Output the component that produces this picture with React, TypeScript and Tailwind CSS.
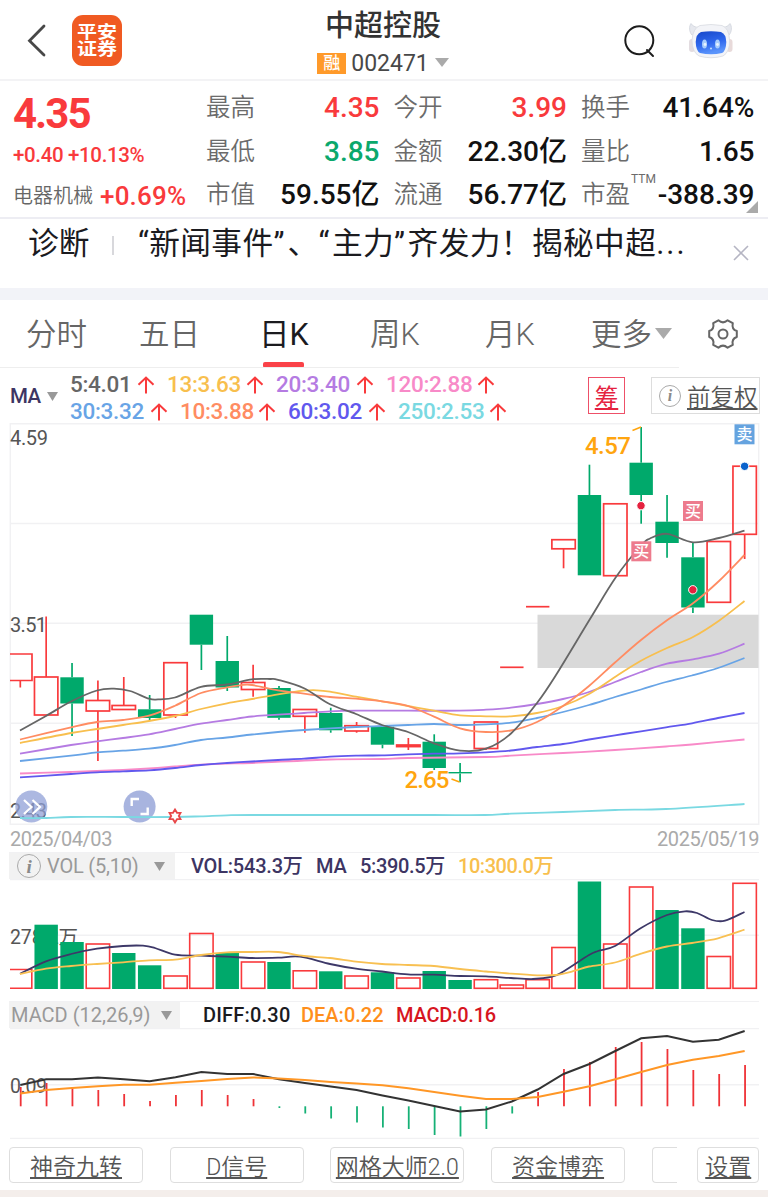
import React from "react";

type Point = [number, number];
type Candle = {
  up: boolean;
  top: number;
  bottom: number;
  high?: number;
  low?: number;
};

const RED = "#f93a3c";
const GREEN = "#00a96b";
const STEP = 25.87;
const xAt = (i: number) => 20.3 + STEP * i;

const candles: Candle[] = [
  { up: true, top: 654, bottom: 680.5, low: 687.5 },
  { up: true, top: 677, bottom: 715, high: 616.5 },
  { up: false, top: 677.3, bottom: 703.5, high: 663, low: 736 },
  { up: true, top: 700.5, bottom: 711, high: 680.5, low: 761 },
  { up: true, top: 705.5, bottom: 709.5, high: 677 },
  { up: false, top: 709.3, bottom: 718, high: 695, low: 720 },
  { up: true, top: 662.7, bottom: 715, low: 718 },
  { up: false, top: 614.7, bottom: 644.7, low: 670 },
  { up: false, top: 661, bottom: 687.5, high: 636, low: 691 },
  { up: true, top: 682.5, bottom: 689.5, high: 664.7, low: 696.7 },
  { up: false, top: 688, bottom: 717.8, high: 686, low: 719.7 },
  { up: true, top: 709.5, bottom: 716.3, low: 732.7 },
  { up: false, top: 713, bottom: 730.3, high: 707.7, low: 732.7 },
  { up: true, top: 725.7, bottom: 731, high: 722, low: 732.7 },
  { up: false, top: 726.7, bottom: 744.7, low: 748.3 },
  { up: true, top: 745, bottom: 746.6, high: 738, low: 750 },
  { up: false, top: 741.7, bottom: 768, high: 734.3, low: 770 },
  { up: false, top: 772, bottom: 773.4, high: 763, low: 782.3 },
  { up: true, top: 722, bottom: 748.5, low: 750 },
  { up: true, top: 667.3, bottom: 667.3 },
  { up: true, top: 606.7, bottom: 606.7 },
  { up: true, top: 539.7, bottom: 548.8, low: 568.3 },
  { up: false, top: 495, bottom: 575.3, high: 464.7 },
  { up: true, top: 503.8, bottom: 575.7 },
  { up: false, top: 462.7, bottom: 495, high: 427, low: 523.7 },
  { up: false, top: 521.7, bottom: 543, high: 495, low: 557.7 },
  { up: false, top: 557.3, bottom: 607.5, high: 543, low: 613 },
  { up: true, top: 541.5, bottom: 602.3 },
  { up: true, top: 466.2, bottom: 534.3, low: 559 },
];

const maLines: { color: string; points: Point[] }[] = [
  {
    color: "#7ad9e2",
    points: [[20, 818], [46, 818], [71, 817], [123, 817], [175, 817], [201, 816.3], [227, 815.3], [253, 815], [355, 815], [433, 815], [485, 815], [511, 813.7], [563, 812], [615, 810], [666, 809], [744.5, 804]],
  },
  {
    color: "#f88ac8",
    points: [[20, 773.5], [71, 772], [97, 771], [149, 768.5], [175, 766.5], [201, 764.7], [227, 763.5], [252, 763], [330, 759.5], [382, 759], [408, 758], [486, 757], [511, 755.7], [563, 753], [615, 750], [666, 746.5], [692, 744.5], [744.5, 739.5]],
  },
  {
    color: "#6158ee",
    points: [[20, 777.3], [71, 774], [97, 772.3], [123, 771.3], [149, 770.3], [175, 768], [201, 765], [227, 763], [252, 761.5], [278, 760], [304, 758.7], [330, 756.7], [356, 755.7], [382, 755.3], [408, 754.3], [434, 753.7], [460, 753.3], [486, 752.3], [511, 750.5], [537, 747], [563, 744], [589, 739.5], [615, 735.3], [641, 731.3], [666, 727.3], [692, 723.3], [718, 718], [744.5, 713]],
  },
  {
    color: "#68a4e6",
    points: [[20, 761], [71, 755.7], [97, 752.3], [123, 750.7], [149, 748.7], [175, 745], [201, 740], [227, 737.5], [252, 734.5], [278, 732], [304, 730], [330, 728.3], [356, 727], [382, 726], [408, 725], [434, 724], [460, 725], [486, 724.3], [511, 722.7], [537, 718], [563, 712], [589, 705], [615, 697], [641, 689.5], [666, 682], [692, 675.5], [718, 668], [744.5, 658]],
  },
  {
    color: "#b57be2",
    points: [[20, 753.7], [71, 745], [97, 741.3], [123, 738], [149, 734.3], [175, 729], [201, 723.7], [227, 720], [252, 716.5], [278, 714.7], [304, 713], [330, 711.3], [356, 710.7], [408, 710.7], [460, 710.7], [486, 709.7], [511, 707.7], [537, 704], [563, 699], [589, 692], [615, 682], [641, 672], [667, 663.7], [693, 659.3], [719, 653.7], [744.5, 643.7]],
  },
  {
    color: "#f8bf4e",
    points: [[20, 743], [71, 733], [97, 729], [123, 725], [149, 721], [175, 716], [201, 709], [227, 703.3], [252, 699], [278, 694.3], [304, 690.7], [317, 690.3], [330, 691.7], [356, 696.7], [382, 701.3], [408, 706], [434, 710.7], [460, 715.3], [486, 716.3], [511, 716.3], [537, 713], [563, 706], [589, 694], [618, 675], [641, 660.7], [667, 648], [693, 637], [719, 620.7], [744.5, 601]],
  },
  {
    color: "#ff8c62",
    points: [[20, 739.5], [71, 727.3], [97, 722], [123, 720], [149, 715.7], [175, 705.7], [201, 693], [227, 687.3], [240, 685.3], [252, 685], [278, 690.3], [304, 693.7], [330, 697], [356, 698.7], [382, 701.3], [408, 706], [434, 716.7], [460, 728.3], [486, 732], [511, 730.5], [537, 722], [563, 706], [589, 686], [615, 662.5], [641, 640], [667, 620.3], [693, 603.3], [719, 581], [744.5, 555]],
  },
  {
    color: "#666666",
    points: [[20, 730.5], [46, 716], [71, 701.5], [97, 690.5], [114, 688.7], [130, 691], [149, 698.7], [158, 699.4], [175, 697.5], [201, 686.8], [227, 684.5], [252, 679.3], [270, 679], [278, 679.8], [304, 688.3], [330, 704.3], [356, 714], [382, 725], [408, 732], [434, 743.3], [460, 750.7], [486, 748.7], [511, 733.5], [537, 703], [556, 675], [590, 619], [616, 577], [641, 545.5], [650, 538.5], [667, 533.8], [693, 542.3], [719, 538], [744.5, 530.7]],
  },
];

const volumes = [
  969.5, 924.7, 942, 944, 953, 965.3, 976, 933.5, 953, 962, 962, 970.8, 971.3,
  976, 972.3, 978, 971, 980, 979.7, 985, 979.7, 947.5, 881.5, 944, 887, 910,
  928.3, 956.5, 883.3,
];
const volumeUp = [0, 3, 6, 7, 9, 11, 13, 15, 18, 19, 20, 21, 23, 24, 27, 28];

const volMa5: Point[] = [[20, 973.7], [46, 961.3], [71, 954], [97, 948.7], [123, 946], [143, 945.7], [155, 948], [175, 954.7], [201, 955.7], [227, 956.7], [252, 958], [278, 957.7], [300, 956.7], [330, 964], [356, 968.7], [382, 971.5], [408, 974.3], [434, 974.7], [460, 976], [486, 976.3], [511, 978], [533, 979], [552, 976.7], [563, 971.7], [589, 955], [598, 951], [615, 946], [641, 928], [667, 915], [685, 911.3], [697, 913], [712, 920], [725, 920.7], [744.5, 912]];
const volMa10: Point[] = [[20, 974], [46, 968.7], [71, 966], [97, 964], [123, 962.3], [149, 960.3], [175, 959.7], [201, 955], [227, 952.3], [252, 952], [278, 952], [304, 956], [330, 958], [356, 961.7], [382, 964], [408, 965], [434, 966], [460, 969], [486, 971.5], [511, 973.7], [537, 975.3], [556, 975], [575, 970.7], [589, 966.5], [615, 962.5], [641, 953.7], [667, 946.5], [692, 943], [718, 938.3], [744.5, 929.7]];

const macdBars = [
  1087, 1083, 1087, 1090, 1094, 1101, 1095, 1090, 1095, 1099, 1108, 1113.5,
  1118.5, 1122.5, 1127.5, 1129, 1135, 1136.5, 1129, 1113.5, 1092, 1069, 1062,
  1047, 1042, 1049, 1070, 1074, 1065,
];
const diff = [
  1085, 1079.3, 1079.3, 1077.5, 1079.3, 1081.3, 1077.3, 1072, 1074, 1074,
  1079.3, 1083, 1086.5, 1090, 1095.5, 1100.5, 1106, 1111.5, 1109.5, 1101.5,
  1089.5, 1074, 1064, 1051, 1038.3, 1036, 1041.7, 1039.7, 1031,
];
const dea = [
  1093.5, 1090, 1088, 1086.3, 1084.7, 1084.7, 1082.7, 1081, 1079, 1077.5,
  1078.5, 1080, 1082, 1083.5, 1085.3, 1088.3, 1092, 1095.7, 1099, 1099, 1097,
  1091.7, 1086.3, 1079.3, 1072, 1065, 1059.7, 1056, 1051,
];

const quoteRows = [
  [
    { label: "最高", value: "4.35", color: "text-[#f93a3c]" },
    { label: "今开", value: "3.99", color: "text-[#f93a3c]" },
    { label: "换手", value: "41.64%", color: "text-[#111111]" },
  ],
  [
    { label: "最低", value: "3.85", color: "text-[#0ba86c]" },
    { label: "金额", value: "22.30亿", color: "text-[#111111]" },
    { label: "量比", value: "1.65", color: "text-[#111111]" },
  ],
  [
    { label: "市值", value: "59.55亿", color: "text-[#111111]" },
    { label: "流通", value: "56.77亿", color: "text-[#111111]" },
    { label: "市盈", value: "-388.39", color: "text-[#111111]", sup: "TTM" },
  ],
];

const maRows = [
  [
    { text: "5:4.01", style: "w-[97px] text-[#666666]" },
    { text: "13:3.63", style: "w-[109px] text-[#f8bf4e]" },
    { text: "20:3.40", style: "w-[110px] text-[#b57be2]" },
    { text: "120:2.88", style: "w-[121px] text-[#f88ac8]" },
  ],
  [
    { text: "30:3.32", style: "w-[110px] text-[#68a4e6]" },
    { text: "10:3.88", style: "w-[108px] text-[#ff8c62]" },
    { text: "60:3.02", style: "w-[110px] text-[#6158ee]" },
    { text: "250:2.53", style: "w-[121px] text-[#7ad9e2]" },
  ],
];

// catmull-rom to bezier
const smooth = (pts: Point[]) => {
  let d = `M${pts[0][0]} ${pts[0][1]}`;
  for (let i = 0; i < pts.length - 1; i++) {
    const p0 = pts[i - 1] || pts[i];
    const p1 = pts[i];
    const p2 = pts[i + 1];
    const p3 = pts[i + 2] || p2;
    d += `C${p1[0] + (p2[0] - p0[0]) / 6} ${p1[1] + (p2[1] - p0[1]) / 6} ${
      p2[0] - (p3[0] - p1[0]) / 6
    } ${p2[1] - (p3[1] - p1[1]) / 6} ${p2[0]} ${p2[1]}`;
  }
  return d;
};

const polyline = (ys: number[]) => ys.map((y, i) => `${xAt(i)},${y}`).join(" ");

const Caret = ({ className }: { className: string }) => (
  <svg viewBox="0 0 16 10" preserveAspectRatio="none" className={className}>
    <path d="M0 0H16L8 10Z" fill="currentColor" />
  </svg>
);

const UpArrow = () => (
  <svg viewBox="0 0 18 18" className="h-[18px] w-[18px] shrink-0">
    <path d="M1.5 8.8L9 1.6L16.5 8.8M9 2V17.5" fill="none" stroke={RED} strokeWidth="2" />
  </svg>
);

const InfoIcon = ({ className }: { className: string }) => (
  <span
    className={`flex items-center justify-center rounded-full border-[1.5px] border-[#aaaaaa] font-['Liberation_Serif',serif] font-bold italic text-[#8a8a8a] ${className}`}
  >
    i
  </span>
);

const Robot = () => (
  <svg viewBox="0 0 46 38" className="h-[38px] w-[46px]">
    <defs>
      <linearGradient id="face" x1="0" y1="0" x2="0.3" y2="1">
        <stop offset="0" stopColor="#1747c8" />
        <stop offset="0.6" stopColor="#2f68ee" />
        <stop offset="1" stopColor="#5a94fb" />
      </linearGradient>
    </defs>
    <path d="M4 13C1 10 1 4 3 1.5C4.500 4 7 5 10 5.500L8 12Z" fill="#e6e8ee" stroke="#cfd3dc" strokeWidth="0.8" />
    <path d="M41 13C44 10 44 4 42 1.5C40.500 4 38 5 35 5.500L37 12Z" fill="#e6e8ee" stroke="#cfd3dc" strokeWidth="0.8" />
    <rect x="1" y="17" width="6" height="13" rx="3" fill="#e3dce0" />
    <rect x="38.500" y="17" width="6" height="13" rx="3" fill="#e8dada" />
    <path d="M12 3.500Q23 1.500 34 3.500Q41 6 41.500 18Q42 30 35 34Q23 37.500 11 34Q4 30 4 18Q5 6 12 3.500Z" fill="#f3f4f8" stroke="#d8dae1" strokeWidth="0.8" />
    <path d="M13 10Q23 8.500 33 10Q38 12 38.300 20Q38 29 34 31Q23 33.500 12 31Q8 29 7.700 20Q8 12 13 10Z" fill="url(#face)" />
    <ellipse cx="16.500" cy="22" rx="2.500" ry="4.600" fill="#a8cdfc" />
    <ellipse cx="29.500" cy="22" rx="2.500" ry="4.600" fill="#a8cdfc" />
    <circle cx="17" cy="22.500" r="1.400" fill="#eaf4ff" />
    <circle cx="29.500" cy="22.500" r="1.400" fill="#eaf4ff" />
    <circle cx="23" cy="26.500" r="1" fill="#c9defd" />
  </svg>
);

const Gear = () => (
  <svg viewBox="0 0 30 30" className="h-[30px] w-[30px]" fill="none" stroke="#666666" strokeWidth="2">
    <path
      d="M19.600 1.300Q15 5.400 10.400 1.300L5.200 4.200Q6.600 10.200 1.200 12V18Q6.600 19.800 5.200 25.800L10.400 28.700Q15 24.600 19.600 28.700L24.800 25.800Q23.400 19.800 28.800 18V12Q23.400 10.200 24.800 4.200Z"
      strokeLinejoin="round"
    />
    <circle cx="15" cy="15" r="4.500" />
  </svg>
);

const Header = () => (
  <header className="flex h-[81px] items-start border-b-2 border-[#f3f3f5]">
    <svg viewBox="0 0 20 34" className="ml-[27px] mt-[24px] h-[34px] w-[20px]">
      <path d="M17 2L2.500 16.700L17 31" fill="none" stroke="#484848" strokeWidth="2.800" strokeLinecap="round" />
    </svg>
    <div className="ml-[25px] mt-[15px] flex h-[51px] w-[50px] flex-col items-center justify-center rounded-[11px] bg-[#f05a22]">
      <p className="w-[40px] scale-y-[0.85] text-[20px] font-bold leading-[20px] text-white">
        平安
        <br />
        证券
      </p>
    </div>
    <div className="ml-[177px] flex w-[168px] flex-col items-center pt-[8px]">
      <h1 className="text-[29px] font-medium leading-[36px] text-[#333333]">中超控股</h1>
      <div className="mt-[5px] flex items-center">
        <span className="flex h-[21px] w-[29px] items-center justify-center bg-[#ff9a2a] text-[17px] font-medium leading-none text-white">
          融
        </span>
        <span className="ml-[5px] mt-[2px] text-[23px] leading-[26px] text-[#484848]">002471</span>
        <Caret className="ml-[6px] mt-[-1px] h-[9px] w-[14px] text-[#aaaaaa]" />
      </div>
    </div>
    <svg viewBox="0 0 32 33" className="ml-[157px] mt-[25px] h-[33px] w-[32px]" fill="none" stroke="#1c1c1c" strokeWidth="2">
      <circle cx="15.300" cy="15.300" r="14" />
      <path d="M23 25L29 31" strokeLinecap="round" />
    </svg>
    <div className="ml-[32px] mt-[22px]">
      <Robot />
    </div>
  </header>
);

const Quote = () => (
  <section className="relative flex h-[138px] border-b-2 border-[#ededf3]">
    <div className="flex w-[206px] flex-col pl-[13px] text-[#f93a3c]">
      <div className="mt-[8px] h-[50px] text-[42px] font-bold leading-[50px] tracking-[-2px]">4.35</div>
      <div className="mt-[3px] whitespace-nowrap text-[20.500px] font-medium leading-[26px] tracking-[-0.350px]">+0.40 +10.13%</div>
      <div className="mt-[13px] flex items-center whitespace-nowrap leading-[30px]">
        <span className="text-[20px] font-[350] text-[#666666]">电器机械</span>
        <span className="ml-[7px] text-[26px] font-medium tracking-[0.200px]">+0.69%</span>
      </div>
    </div>
    <div className="flex flex-col pt-[5px]">
      {quoteRows.map((row, i) => (
        <div key={i} className="flex h-[44px] gap-[14px]">
          {row.map((item) => (
            <div key={item.label} className="flex w-[173.500px] items-center justify-between whitespace-nowrap">
              <span className="relative text-[24.500px] font-[350] leading-[34px] text-[#6b6b6b]">
                {item.label}
                {"sup" in item && (
                  <span className="absolute left-[50px] top-[-8px] text-[12px] font-normal leading-[18px]">{item.sup}</span>
                )}
              </span>
              <span className={`text-[28px] font-medium leading-[34px] ${item.color}`}>{item.value}</span>
            </div>
          ))}
        </div>
      ))}
    </div>
    <svg viewBox="0 0 12 12" className="absolute bottom-[4px] right-[10px] h-[12px] w-[12px]">
      <path d="M12 0V12H0Z" fill="#aaaaaa" />
    </svg>
  </section>
);

const News = () => (
  <section className="flex h-[69px] items-start text-[30.700px] leading-[49px] text-[#1b1b1f]">
    <span className="ml-[28px]">诊断</span>
    <span className="ml-[23px] mt-[17px] h-[19px] w-[1.500px] bg-[#d8d8dc]" />
    <span className="ml-[24px] w-[558px] whitespace-nowrap tracking-[0.400px]">
      “新闻事件<span className="tracking-[3px]">”</span>、<span className="tracking-[2.500px]">“</span>
      主力<span className="tracking-[2.500px]">”</span>齐发力！揭秘中超<span className="tracking-[2px]">...</span>
    </span>
    <svg viewBox="0 0 16 16" className="ml-[37px] mt-[26px] h-[16px] w-[16px]">
      <path d="M1 1L15 15M15 1L1 15" stroke="#b5b5c3" strokeWidth="1.600" />
    </svg>
  </section>
);

const Tabs = () => (
  <nav className="relative flex h-[68px] items-start text-[30.500px] font-[350] leading-[69px] text-[#666666]">
    <span className="w-[113px] pl-[26px]">分时</span>
    <span className="w-[120px] pl-[26px]">五日</span>
    <span className="relative w-[112px] pl-[26px] font-normal text-[#1b1b1f]">
      日K
      <span className="absolute bottom-[1px] left-[30px] h-[6px] w-[41px] rounded-[2px] bg-[#fa4248]" />
    </span>
    <span className="w-[115px] pl-[25px]">周K</span>
    <span className="w-[131px] pl-[25px]">月K</span>
    <span className="flex w-[117px] items-center">
      更多
      <Caret className="ml-[3px] mt-[-3px] h-[11px] w-[17px] text-[#aaaaaa]" />
    </span>
    <span className="mt-[19px]">
      <Gear />
    </span>
    <span className="absolute bottom-0 left-0 h-px w-[679px] bg-[#eeeeee]" />
  </nav>
);

const MaLegend = () => (
  <section className="flex h-[55px] items-start">
    <div className="flex w-[70px] items-center pl-[10px] pt-[13px] text-[20.500px] font-medium leading-[30px] tracking-[-0.500px] text-[#3d3563]">
      MA
      <Caret className="ml-[6px] h-[9px] w-[11px] text-[#999999]" />
    </div>
    <div className="flex w-[518px] flex-col pt-[3px]">
      {maRows.map((row, i) => (
        <div key={i} className="flex h-[27px]">
          {row.map((m) => (
            <span key={m.text} className={`flex items-center justify-between pr-[12px] text-[22.500px] font-medium leading-[27px] tracking-[-0.300px] ${m.style}`}>
              {m.text}
              <UpArrow />
            </span>
          ))}
        </div>
      ))}
    </div>
    <span className="mt-[9px] flex h-[37px] w-[37px] items-center justify-center border-[1.500px] border-[#ee5068] pt-[4px] text-[23.500px] leading-[34px] text-[#e5223f] underline decoration-2 underline-offset-[2px]">
      筹
    </span>
    <span className="ml-[26px] mt-[9px] flex h-[37px] w-[109px] items-center whitespace-nowrap border-[1.500px] border-[#dddddd] pl-[7px] text-[23.500px] font-[350] leading-[34px] text-[#555555]">
      <InfoIcon className="mr-[6px] h-[22px] w-[22px] shrink-0 text-[16px] leading-none" />
      <span className="pt-[4px] underline decoration-2 underline-offset-[2px]">前复权</span>
    </span>
  </section>
);

const Badge = ({ x, y, fill, text }: { x: number; y: number; fill: string; text: string }) => (
  <g>
    <rect x={x} y={y} width="20" height="20" fill={fill} />
    <text x={x + 10} y={y + 16} fontSize="16" fontWeight="500" fill="#ffffff" textAnchor="middle">
      {text}
    </text>
  </g>
);

const KLineChart = () => (
  <svg viewBox="0 423 768 402" className="h-[402px] w-[768px]">
    <g stroke="#f1f1f3" strokeWidth="1.500">
      <path d="M10 423.700H759M10 523.500H759M10 623.300H759M10 723.300H759M10 824.300H759M10.300 423V825M758.700 423V825" />
    </g>
    <rect x="537.500" y="614.700" width="221" height="53.300" fill="#d9d9d9" />
    <g fontSize="20" fill="#555555">
      <text x="10" y="445" textLength="38">4.59</text>
      <text x="10" y="631.500" textLength="37">3.51</text>
      <text x="10" y="818" textLength="37">2.43</text>
    </g>
    {candles.map((c, i) => {
      const x = xAt(i);
      const color = c.up ? RED : GREEN;
      return (
        <g key={i} stroke={color} strokeWidth="1.700">
          {c.high && <path d={`M${x} ${c.high}V${c.top}`} />}
          {c.low && <path d={`M${x} ${c.bottom}V${c.low}`} />}
          {c.bottom === c.top ? (
            <path d={`M${x - 11.700} ${c.top}H${x + 11.700}`} />
          ) : c.up ? (
            i === 0 ? (
              <path d={`M10 ${c.top}H${x + 11.700}V${c.bottom}H10`} fill="none" />
            ) : (
              <rect x={x - 11.700} y={c.top} width={23.400} height={c.bottom - c.top} fill="none" />
            )
          ) : (
            <rect x={x - 11.700} y={c.top} width={23.400} height={c.bottom - c.top} fill={color} stroke="none" />
          )}
        </g>
      );
    })}
    <circle cx="31.300" cy="806.500" r="16" fill="#8f9fd6" fillOpacity="0.740" />
    <path d="M24 800L31.500 807L24 814M32.500 800L40 807L32.500 814" fill="none" stroke="#ffffff" strokeWidth="2.200" />
    <circle cx="139.600" cy="806.500" r="16" fill="#8f9fd6" fillOpacity="0.780" />
    <path d="M131.700 806V799H139M147.700 807.500V814H140.500" fill="none" stroke="#ffffff" strokeWidth="2.400" />
    {maLines.map((line) => (
      <path key={line.color} d={smooth(line.points)} fill="none" stroke={line.color} strokeWidth="1.800" />
    ))}
    <path
      d="M175 809.500L177 812.800H180.500L178.800 816L180.500 819.200H177L175 822.500L173 819.200H169.500L171.200 816L169.500 812.800H173Z"
      fill="#ffffff"
      stroke="#e8484a"
      strokeWidth="1.800"
    />
    <g fontSize="24" fontWeight="500" fill="#ffa50f">
      <text x="585" y="453.500" textLength="46">4.57</text>
      <text x="404.500" y="787.500" textLength="45">2.65</text>
    </g>
    <path d="M632.500 430.500L641 427M451.500 779L459.500 782" stroke="#ffa50f" strokeWidth="1.500" />
    <Badge x={734.500} y={424.300} fill="#65a3df" text="卖" />
    <Badge x={683} y={501} fill="#ed7b8d" text="买" />
    <Badge x={631.300} y={541.300} fill="#ed7b8d" text="买" />
    <g stroke="#ffffff" strokeWidth="1">
      <circle cx="641" cy="505.700" r="4.200" fill="#e5223f" />
      <circle cx="692.800" cy="589.800" r="4.200" fill="#e5223f" />
      <circle cx="744.600" cy="466.300" r="4.200" fill="#0a62cc" />
    </g>
  </svg>
);

const VolumeChart = () => (
  <svg viewBox="0 879 768 122" className="h-[122px] w-[768px]">
    <path d="M10 879.500H759M10 935.300H759" stroke="#f1f1f3" strokeWidth="1.500" />
    <text x="10" y="943.500" fontSize="19.500" fill="#555555" textLength="68">278.2万</text>
    {volumes.map((top, i) => {
      const x = xAt(i);
      if (i === 0) {
        return <path key={i} d={`M10 ${top}H${x + 11.500}V988.300H10`} fill="#ffffff" stroke={RED} strokeWidth="1.600" />;
      }
      return volumeUp.includes(i) ? (
        <rect key={i} x={x - 11.700} y={top} width="23.400" height={988.300 - top} fill="none" stroke={RED} strokeWidth="1.600" />
      ) : (
        <rect key={i} x={x - 11.700} y={top} width="23.400" height={989 - top} fill={GREEN} />
      );
    })}
    <path d={smooth(volMa5)} fill="none" stroke="#3d3868" strokeWidth="1.800" />
    <path d={smooth(volMa10)} fill="none" stroke="#f8c052" strokeWidth="1.800" />
  </svg>
);

const MacdChart = () => (
  <svg viewBox="0 1028 768 111" className="h-[111px] w-[768px]">
    <path d="M10 1028.500H759M10 1084.700H759M10 1138.500H759" stroke="#f1f1f3" strokeWidth="1.500" />
    <text x="10" y="1093" fontSize="19.500" fill="#555555" textLength="37">0.09</text>
    {macdBars.map((y, i) => (
      <path key={i} d={`M${xAt(i) + 0.400} 1106.300V${y}`} stroke={y < 1106 ? "#ef3237" : "#16b176"} strokeWidth="1.800" />
    ))}
    <polyline points={polyline(diff)} fill="none" stroke="#333333" strokeWidth="2" />
    <polyline points={polyline(dea)} fill="none" stroke="#ff9726" strokeWidth="2" />
  </svg>
);

const BottomBar = () => (
  <footer className="flex h-[59px] flex-col bg-white">
    <div className="flex h-[51px] pl-[9px] pt-[8px] text-[23px] font-[350] leading-[34px] text-[#555555]">
      {["神奇九转", "D信号", "网格大师2.0", "资金博弈"].map((name) => (
        <button
          key={name}
          className="mr-[26.700px] h-[36px] w-[134px] shrink-0 whitespace-nowrap rounded-[4px] border-[1.500px] border-[#dedede] pt-[3px] underline decoration-2 underline-offset-[2px]"
        >
          {name}
        </button>
      ))}
      <span className="h-[36px] w-[25px] rounded-l-[4px] border-[1.500px] border-r-0 border-[#dedede]" />
      <button className="ml-[20.500px] h-[36px] w-[62px] shrink-0 whitespace-nowrap rounded-[4px] border-[1.500px] border-[#dedede] pt-[3px] underline decoration-2 underline-offset-[2px]">
        设置
      </button>
    </div>
    <div className="h-[7px] bg-[#f4eeeb]" />
  </footer>
);

const App = () => {
  return (
    <div className="flex h-[1198px] w-[768px] flex-col overflow-hidden bg-white font-[Roboto,'Noto_Sans_CJK_SC',sans-serif]">
      <Header />
      <Quote />
      <News />
      <div className="h-[12px] bg-[#f2f3f8]" />
      <Tabs />
      <MaLegend />
      <KLineChart />

      <div className="flex h-[27px] items-center justify-between pl-[10px] pr-[9px] pt-[2px] text-[20px] leading-[27px] tracking-[-0.450px] text-[#aaaaaa]">
        <span>2025/04/03</span>
        <span>2025/05/19</span>
      </div>

      {/* volume */}
      <div className="ml-[9px] flex h-[27px] w-[750px] items-center border-t border-[#f1f1f3] text-[20px] font-medium leading-[27px] tracking-[-0.200px] text-[#3d3563]">
        <div className="flex h-full w-[166px] items-center bg-[#f2f2f2] pl-[8px] font-normal text-[#999999]">
          <InfoIcon className="mr-[6px] h-[24px] w-[24px] text-[19px] leading-none" />
          VOL (5,10)
          <Caret className="ml-[15px] h-[9px] w-[11px]" />
        </div>
        <span className="ml-[16px] w-[125px]">VOL:543.3万</span>
        <span className="w-[44px]">MA</span>
        <span className="w-[98px] tracking-[-0.350px]">5:390.5万</span>
        <span className="tracking-[-0.450px] text-[#f8bf4e]">10:300.0万</span>
      </div>
      <VolumeChart />

      {/* macd */}
      <div className="ml-[9px] flex h-[27px] w-[750px] items-center border-t border-[#f1f1f3] text-[20px] font-medium leading-[27px]">
        <div className="flex h-full w-[171px] items-center bg-[#f2f2f2] pl-[2px] font-normal text-[#999999]">
          MACD (12,26,9)
          <Caret className="ml-[10px] h-[9px] w-[11px]" />
        </div>
        <span className="ml-[23px] w-[98px] tracking-[0.200px] text-[#1b1b1f]">DIFF:0.30</span>
        <span className="w-[95px] text-[#ff8f1c]">DEA:0.22</span>
        <span className="tracking-[-0.200px] text-[#d7161f]">MACD:0.16</span>
      </div>
      <MacdChart />
      <BottomBar />
    </div>
  );
};

export default App;
